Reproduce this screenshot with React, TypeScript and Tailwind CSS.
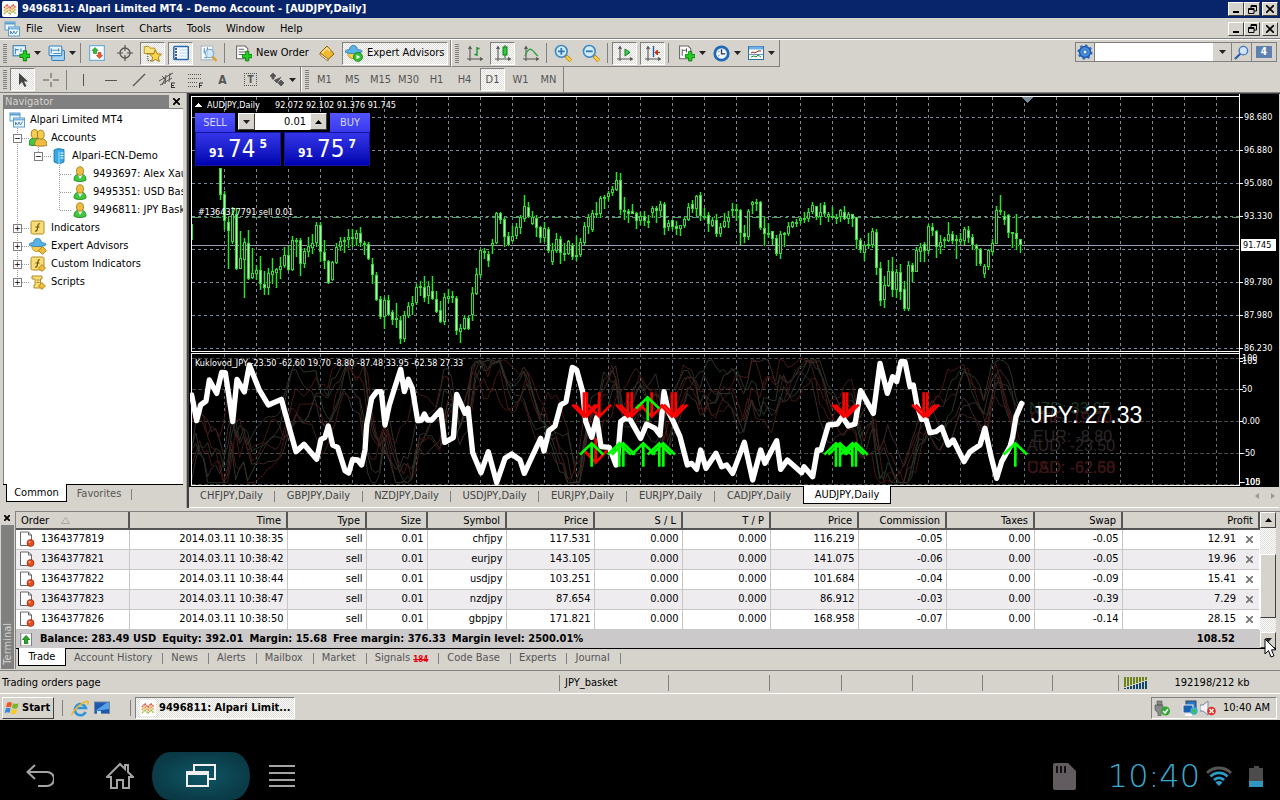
import type { ReactNode } from "react";

// [high, body top, body bottom, low, filled]
const CANDLES = [
  [78,78,105,110,1],[101,104,131,140,1],[127,132,141,179,1],[117,124,152,154,0],[118,124,179,180,1],[141,168,179,179,0],
  [148,152,170,208,0],[140,153,189,190,1],[158,183,188,189,0],[175,180,184,190,0],[166,180,194,200,1],[181,194,198,205,1],
  [178,183,198,205,0],[168,181,185,194,0],[178,179,183,198,0],[167,176,180,189,0],[157,165,176,178,0],[156,165,180,181,1],
  [146,150,180,181,0],[148,150,151,167,0],[148,150,174,186,1],[158,161,174,178,0],[147,156,162,167,0],[144,153,158,164,0],
  [132,135,153,157,0],[132,135,162,172,1],[150,162,171,179,1],[170,171,193,194,1],[171,172,190,191,0],[153,157,173,174,0],
  [147,151,157,161,0],[147,150,152,163,0],[139,147,150,158,0],[139,147,149,157,0],[140,143,149,156,0],[137,143,153,157,1],
  [151,153,155,165,1],[152,154,169,170,1],[168,174,185,194,1],[182,185,210,211,1],[206,209,227,229,1],[207,210,227,239,0],
  [205,210,225,226,1],[220,222,230,235,1],[213,228,230,238,1],[226,230,249,254,1],[221,225,249,252,0],[212,216,226,228,0],
  [206,213,216,225,0],[194,197,213,215,0],[191,196,198,206,0],[186,197,208,212,1],[191,196,206,214,0],[186,201,209,210,1],
  [201,209,222,223,1],[211,220,232,233,1],[203,207,232,235,0],[199,206,209,213,0],[201,206,208,213,1],[206,208,241,245,1],
  [234,238,242,253,0],[225,228,239,240,0],[226,228,239,240,1],[197,203,225,231,0],[178,184,204,205,0],[159,160,185,188,0],
  [158,161,163,169,1],[161,164,171,177,1],[149,153,156,164,0],[122,123,153,154,0],[122,123,130,134,1],[127,129,147,157,1],
  [142,146,155,156,1],[136,146,151,152,0],[133,137,146,149,0],[125,127,138,144,0],[105,116,129,132,0],[112,117,127,128,1],
  [121,127,134,135,0],[125,128,138,147,1],[136,137,148,153,1],[132,138,148,152,0],[137,139,161,163,1],[153,160,172,175,0],
  [143,149,161,163,0],[146,149,163,174,1],[153,163,164,171,0],[150,151,164,165,0],[153,155,167,170,1],[146,165,167,171,0],
  [148,152,165,167,0],[132,136,153,155,0],[124,127,137,144,0],[120,123,140,142,0],[112,123,124,128,0],[106,108,124,128,0],
  [105,107,109,119,0],[101,103,107,111,0],[96,99,103,106,0],[82,90,100,101,0],[83,90,120,125,1],[107,120,122,130,1],
  [119,121,124,133,1],[114,121,124,124,1],[122,123,131,139,1],[122,126,131,135,0],[121,126,131,136,1],[125,131,132,138,0],
  [116,118,123,128,0],[116,118,121,133,1],[111,114,121,126,0],[112,114,138,145,1],[130,133,137,141,0],[130,130,137,140,1],
  [131,136,139,145,1],[135,135,139,146,0],[127,129,136,138,0],[113,117,130,131,0],[110,114,119,123,1],[105,106,119,126,0],
  [102,105,126,131,1],[118,126,127,130,0],[122,125,134,142,1],[127,130,136,137,0],[124,130,144,147,1],[133,137,144,147,0],
  [123,131,137,138,0],[121,127,132,138,0],[113,119,121,126,0],[114,119,120,131,0],[119,120,143,155,1],[135,143,147,153,1],
  [119,121,147,150,0],[111,112,115,124,0],[109,112,113,121,0],[111,112,138,140,1],[127,138,144,156,1],[133,143,144,148,0],
  [141,141,149,155,1],[145,148,164,166,1],[141,144,164,169,0],[142,143,144,157,0],[132,136,144,146,0],[131,132,137,138,0],
  [129,132,133,137,0],[127,128,131,134,0],[122,128,130,133,0],[118,122,129,132,0],[112,115,122,124,0],[116,116,127,130,1],
  [113,122,127,135,0],[112,115,124,127,1],[122,124,127,132,0],[117,126,128,128,0],[124,127,128,134,0],[119,120,127,132,0],
  [116,122,129,130,1],[122,124,129,134,0],[124,124,129,137,1],[127,127,150,159,1],[148,150,160,163,1],[154,155,163,171,0],
  [143,154,155,159,0],[138,141,155,158,0],[139,142,178,185,1],[172,178,211,216,1],[186,195,210,218,0],[170,181,196,197,0],
  [167,181,200,207,1],[179,182,200,208,0],[174,182,202,210,1],[191,199,219,221,1],[171,175,219,221,0],[173,175,182,192,1],
  [157,160,182,182,0],[153,157,162,172,0],[152,154,161,172,1],[134,136,161,164,0],[133,137,141,146,1],[140,141,157,168,1],
  [145,152,157,164,0],[147,149,151,158,0],[132,144,151,152,0],[141,144,151,154,1],[145,149,150,169,0],[143,149,152,155,0],
  [137,139,151,155,0],[136,140,148,153,1],[144,147,155,160,1],[154,155,159,176,1],[158,159,174,176,1],[174,176,184,188,0],
  [159,160,177,180,0],[149,153,162,165,0],[116,120,154,154,0],[105,120,122,125,1],[121,126,130,135,1],[124,125,143,148,1],
  [142,142,144,158,0],[124,143,149,160,1],[149,149,155,163,1],
];

// Indicator points use a grid three times finer than the pane
const JPY_LINE: number[][] = [
  [5,135],[20,212],[32,165],[48,153],[58,90],[80,130],[95,67],[106,68],[128,215],[141,88],[163,126],[178,45],[207,118],[235,165],
  [274,148],[318,305],[342,283],[380,328],[393,268],[405,262],[415,228],[428,285],[443,292],[465,362],[476,369],[488,328],
  [503,330],[515,345],[525,300],[530,225],[545,145],[560,125],[574,125],[585,225],[598,165],[612,120],[632,58],[643,125],
  [655,88],[667,115],[683,212],[695,210],[703,192],[712,210],[725,210],[752,180],[764,277],[790,263],[800,133],[825,190],
  [834,175],[848,308],[873,368],[895,305],[920,398],[945,325],[965,312],[990,330],[1003,370],[1027,318],[1052,265],[1062,303],
  [1077,242],[1095,228],[1112,165],[1128,155],[1147,52],[1160,60],[1178,125],[1187,215],[1205,262],[1220,203],[1233,290],
  [1258,292],[1278,345],[1285,300],[1292,215],[1305,205],[1320,208],[1352,265],[1370,222],[1395,235],[1410,255],[1422,125],
  [1435,185],[1450,215],[1470,260],[1492,345],[1505,340],[1520,358],[1532,300],[1548,355],[1578,310],[1595,350],[1610,345],
  [1628,370],[1663,277],[1688,390],[1712,300],[1725,340],[1760,272],[1772,358],[1792,330],[1835,368],[1842,350],[1868,380],
  [1882,300],[1893,300],[1915,225],[1942,222],[1957,200],[1975,228],[1995,222],[2012,122],[2050,190],[2070,40],[2092,130],
  [2108,80],[2120,95],[2133,35],[2145,35],[2160,110],[2170,105],[2180,160],[2195,208],[2208,208],[2220,248],[2238,245],
  [2255,232],[2275,285],[2290,270],[2322,335],[2340,305],[2370,285],[2385,235],[2402,315],[2420,385],[2435,335],[2460,290],
  [2468,260],[2478,200],[2495,160],
];

const DOWN_ARROWS = [1182, 1190, 1228, 1313, 1325, 1385, 1446, 1457, 1961, 1971, 2201, 2212];
const UP_ARROWS = [1205, 1288, 1300, 1360, 1408, 1420, 1938, 1950, 1987, 1998, 2476];

function jpyAt(x: number) {
  for (let i = 1; i < JPY_LINE.length; i++) {
    const [x1, y1] = JPY_LINE[i];
    if (x <= x1) {
      const [x0, y0] = JPY_LINE[i - 1];
      return y0 + ((y1 - y0) * (x - x0)) / (x1 - x0);
    }
  }
  return 160;
}

function crossPoints(k: number) {
  const pts: string[] = [];
  for (let x = 5; x <= 2490; x += 12) {
    const mirror = 430 - jpyAt(x - 8 + k * 3);
    const wave = Math.sin(x / (47 + k * 9) + k * 1.7) * (45 + k * 9) + Math.sin(x / (15 + k * 2) + k) * 26;
    const y = 215 + (mirror - 215) * 0.95 + wave;
    const bounded = Math.max(28 + (y < 28 ? (28 - y) * 0.25 : 0), Math.min(398, y));
    pts.push(`${x},${Math.round(bounded)}`);
  }
  return pts.join(" ");
}

const CROSS_COLORS = ["#451815", "#26352a", "#3a2a29", "#4a1715", "#293629", "#332d2d", "#401c19"];

const raised = "border border-t-white border-l-white border-r-[#404040] border-b-[#404040] bg-[#d5d3cc]";
const pressed =
  "border border-t-[#808080] border-l-[#808080] border-r-white border-b-white bg-[repeating-conic-gradient(#fff_0_25%,#dddbd6_0_50%)] bg-[length:2px_2px]";

function Icon({ children, size = 16 }: { children: ReactNode; size?: number }) {
  return (
    <svg width={size} height={size} viewBox="0 0 16 16" className="shrink-0" fill="none" aria-hidden="true">
      {children}
    </svg>
  );
}

const Plus = () => <path d="M10 6h3v3h3v3h-3v3h-3v-3H7V9h3z" fill="#1fd01f" stroke="#087808" strokeWidth=".8" />;

const LogoIcon = () => (
  <Icon>
    <rect width="16" height="16" rx="2" fill="#fff" />
    <path d="M2 7l3-3 3 3 3-3 3 3" stroke="#d8543c" strokeWidth="1.6" strokeDasharray="1.5 .6" />
    <path d="M2 10l3-3 3 3 3-3 3 3" stroke="#e89838" strokeWidth="1.6" strokeDasharray="1.5 .6" />
    <path d="M2 13l3-3 3 3 3-3 3 3" stroke="#a8b850" strokeWidth="1.6" strokeDasharray="1.5 .6" />
  </Icon>
);
const ChartsIcon = () => (
  <Icon>
    <rect x="1" y="1" width="10" height="8" fill="#eef7fd" stroke="#5a9bd0" />
    <path d="M1 2.5h10" stroke="#5a9bd0" strokeWidth="2" />
    <rect x="4.500" y="6" width="11" height="9" fill="#f4fafe" stroke="#5a9bd0" />
    <path d="M5 7.500h10" stroke="#7ab2de" strokeWidth="2" />
    <path d="M6.500 13V10l2 3 1.500-3 1.500 3 2-3.500" stroke="#4a88c0" />
  </Icon>
);
const NewChartIcon = () => (
  <Icon size={18}>
    <rect x="1" y="1.500" width="11" height="9" fill="#e6f4fc" stroke="#3a80b8" />
    <path d="M3 4v5M3 5h3M8 4v3" stroke="#4a88b8" />
    <Plus />
  </Icon>
);
const ProfilesIcon = () => (
  <Icon size={17}>
    <rect x="3.500" y="5" width="12" height="9.500" rx="1" fill="#a8d4f4" stroke="#3a80b8" />
    <rect x="1" y="1" width="12" height="9" rx="1" fill="#e6f4fc" stroke="#3a80b8" />
    <path d="M3 3v5M3 5h8M5 8h7M10 3v3" stroke="#4a90c8" />
  </Icon>
);
const MarketIcon = () => (
  <Icon>
    <rect x=".5" y=".5" width="15" height="15" rx="1" fill="#fff" stroke="#6cb0de" strokeWidth="1.500" />
    <path d="M6 2.500l3 3H7.500v3h-3v-3H3z" fill="#2cc030" stroke="#107818" strokeWidth=".6" />
    <path d="M10.500 13.500l-3-3H9v-3h3v3h1.500z" fill="#f06038" stroke="#b02810" strokeWidth=".6" />
  </Icon>
);
const TargetIcon = () => (
  <Icon>
    <circle cx="8" cy="8" r="5" stroke="#555" strokeWidth="1.300" />
    <path d="M8 0v6M8 10v6M0 8h6M10 8h6" stroke="#555" strokeWidth="1.200" />
  </Icon>
);
const StarFolderIcon = () => (
  <Icon size={19}>
    <path d="M1 2h4l1 1.500h4V8H1z" fill="#f8e27c" stroke="#b89020" strokeWidth=".8" />
    <path d="M4 8v6h4" stroke="#555" strokeDasharray="1 1" />
    <path d="M10.500 5l1.500 3.300 3.500.3-2.600 2.500.8 3.700-3.200-1.900-3.200 1.900.8-3.700L5.500 8.600 9 8.300z" fill="#fbd648" stroke="#a87810" strokeWidth=".8" />
  </Icon>
);
const TerminalIcon = () => (
  <Icon>
    <rect x=".8" y="1.500" width="14.500" height="13" rx="1" fill="#f6fbff" stroke="#2868b0" strokeWidth="1.500" />
    <path d="M2 4h2M2 7h2M2 10h2M2 13h2" stroke="#102858" strokeWidth="1.500" />
    <path d="M6 5h8M6 8h8M6 11h8" stroke="#b8d8f4" />
  </Icon>
);
const TesterIcon = () => (
  <Icon size={17}>
    <path d="M1 1h11v13H1z" fill="#fafafa" stroke="#a8b8c4" />
    <path d="M4 3v5M7 2v8M4 12h3" stroke="#4890c8" />
    <circle cx="9" cy="8" r="4" fill="#c8e4f8" fillOpacity=".8" stroke="#78a8cc" />
    <path d="M12 11l3.500 4" stroke="#e0a020" strokeWidth="2.200" />
  </Icon>
);
const DocPlusIcon = ({ lines = true }: { lines?: boolean }) => (
  <Icon size={17}>
    <path d="M1.500 1h8l2.500 2.500V13H1.500z" fill="#fff" stroke="#666" />
    <path d={lines ? "M3.500 4h5M3.500 6.500h6M3.500 9h4" : "M4 4v6M4 5h4M8 3v4"} stroke="#666" />
    <Plus />
  </Icon>
);
const BookIcon = () => (
  <Icon>
    <path d="M1 8l7-7 7 8-6 5.500z" fill="#f0b830" stroke="#8c5c08" />
    <path d="M1 8v2l8 6v-2z" fill="#fff" stroke="#8c5c08" strokeWidth=".8" />
    <path d="M3 8l5-5 3 3" stroke="#ffe890" strokeWidth="1.500" />
  </Icon>
);
const ExpertIcon = ({ play = false }: { play?: boolean }) => (
  <Icon size={18}>
    <circle cx="7" cy="8.500" r="4.500" fill="#f4cc50" stroke="#b88818" strokeWidth=".7" />
    <path d="M4 5c0-5 7-5 7 0 3 0 5 1 4 2-2 2-13 2-15 0 0-1 1-2 4-2z" fill="#58b4e8" stroke="#2474a8" strokeWidth=".7" />
    {play ? <circle cx="11.500" cy="11.500" r="4" fill="#30c030" stroke="#108010" strokeWidth=".7" /> : null}
    {play ? <path d="M10.200 9.500v4l3.300-2z" fill="#fff" /> : <path d="M12 8.500l3.500 3.500-3.500 3.500L8.500 12z" fill="#f0bc38" stroke="#a07010" strokeWidth=".7" />}
  </Icon>
);
const Axes = () => <path d="M3 2v14M0 14h16M1.500 4L3 1.500 4.500 4M13 12.500l2.500 1.500-2.500 1.500" stroke="#555" strokeWidth="1.100" />;
const BarChartIcon = () => <Icon><Axes /><path d="M10 2v9M7.500 9.500H10M10 3.500h2.500" stroke="#189028" strokeWidth="1.300" /></Icon>;
const CandleIcon = () => <Icon><Axes /><path d="M10 0v13" stroke="#107818" /><rect x="8" y="2" width="4" height="8" fill="#2cd03c" stroke="#107818" /></Icon>;
const LineChartIcon = () => <Icon><Axes /><path d="M2 11c2-6 5-8 7-6 2 1 3 4 6 6" stroke="#30a040" strokeWidth="1.300" /></Icon>;
const ScrollIcon = () => <Icon><Axes /><path d="M8 4l5 3.500L8 11z" fill="#40c850" stroke="#108020" /></Icon>;
const ShiftIcon = () => <Icon><Axes /><path d="M8.500 1v11" stroke="#2858a8" strokeWidth="1.400" /><path d="M10 7.500h5M12.500 5L10 7.500l2.500 2.500z" fill="#c03010" stroke="#c03010" /></Icon>;
const ZoomIcon = ({ minus = false }: { minus?: boolean }) => (
  <Icon size={18}>
    <path d="M10.500 10.500l4.500 4.500" stroke="#a87810" strokeWidth="3.200" />
    <path d="M11 11l4 4" stroke="#f8d040" strokeWidth="2" />
    <circle cx="6.500" cy="6.500" r="5.200" fill="#d0ecfc" stroke="#3c88c4" strokeWidth="1.400" />
    <path d={minus ? "M3.500 6.500h6" : "M3.500 6.500h6M6.500 3.500v6"} stroke="#3478b0" strokeWidth="1.600" />
  </Icon>
);
const ClockIcon = () => (
  <Icon size={17}>
    <circle cx="8" cy="8" r="6.300" fill="#eef8ff" stroke="#2068b8" strokeWidth="2.600" />
    <path d="M8 4v4.300h3.500" stroke="#334" strokeWidth="1.200" />
    <path d="M5 5.500l1 1M5 10.500l1-1" stroke="#88a" />
  </Icon>
);
const TemplateIcon = () => (
  <Icon>
    <rect x=".5" y="1.500" width="15" height="13" fill="#fff" stroke="#2c70a8" />
    <path d="M1 3h14" stroke="#70b0e0" strokeWidth="3" />
    <path d="M3 8l2-1 2 1 3-2h3" stroke="#902018" />
    <path d="M3 12l3-1 2 1 2-2 3 2" stroke="#209040" />
    <path d="M1 9.500h14" stroke="#2c70a8" strokeWidth=".7" />
  </Icon>
);
const FxIcon = ({ tag = false }: { tag?: boolean }) => (
  <Icon>
    <rect x="1" y="1" width="13" height="13" rx="1.500" fill="#f8dc78" stroke="#b08c28" />
    <path d="M10 4c-2-1-2 1-2.400 3.500S7 11.500 5 11M5.500 7h4" stroke="#705008" strokeWidth="1.200" />
    {tag ? <path d="M12 8.500l3.500 3.500-3.500 3.500L8.500 12z" fill="#f0bc38" stroke="#a07010" strokeWidth=".7" /> : null}
  </Icon>
);
const ScriptIcon = () => (
  <Icon>
    <path d="M2 2h10v3h-1.500v6H13v3H4v-3h1V5H2z" fill="#f8dc78" stroke="#b08c28" />
    <path d="M6.500 6h3M6.500 8.500h3" stroke="#b08c28" />
    <path d="M12 8.500l3.500 3.500-3.500 3.500L8.500 12z" fill="#f0bc38" stroke="#a07010" strokeWidth=".7" />
  </Icon>
);
const PersonIcon = () => (
  <Icon>
    <path d="M2 14c0-5 3-6 6-6s6 1 6 6c-2 2-10 2-12 0z" fill="#40c840" stroke="#188018" strokeWidth=".8" />
    <path d="M6 9l2 4 2.500-4z" fill="#fff" />
    <ellipse cx="8" cy="5" rx="3.500" ry="4.300" fill="#f0bc40" stroke="#a07818" strokeWidth=".8" />
  </Icon>
);
const PeopleIcon = () => (
  <Icon size={18}>
    <path d="M0 14c0-5 2-6 5-6s5 1 5 6c-2 1-8 1-10 0z" fill="#40c840" stroke="#188018" strokeWidth=".8" />
    <ellipse cx="5" cy="4.500" rx="3" ry="4" fill="#f4cc50" stroke="#a07818" strokeWidth=".8" />
    <path d="M5 14.500c0-5 2-6 5-6s6 1 6 6c-2 1-9 1-11 0z" fill="#f0bc40" stroke="#a07818" strokeWidth=".8" />
    <ellipse cx="10.500" cy="5" rx="3" ry="4" fill="#f4cc50" stroke="#a07818" strokeWidth=".8" />
  </Icon>
);
const ServerIcon = () => (
  <Icon>
    <path d="M3 2l4-1.500 6 1V14l-5 2-5-2z" fill="#38a8e4" stroke="#1870a8" strokeWidth=".8" />
    <path d="M8 3.500V16" stroke="#a8e0fc" />
    <path d="M9.500 5h3M9.500 7.500h3M9.500 10h3" stroke="#fff" />
  </Icon>
);
const OrderIcon = () => (
  <Icon>
    <path d="M1.500 1h8l3 3v10.500h-11z" fill="#fff" stroke="#666" />
    <path d="M9.500 1v3h3" stroke="#666" />
    <circle cx="11.500" cy="12" r="3.500" fill="#e05020" stroke="#982408" strokeWidth=".7" />
    <circle cx="10.500" cy="11" r="1" fill="#f8a888" />
  </Icon>
);

const Caret = () => (
  <svg width="7" height="4" className="shrink-0" aria-hidden="true"><path d="M0 0h7L3.500 4z" fill="#222" /></svg>
);
const Grip = () => (
  <span className="ml-[3px] h-[19px] w-1 shrink-0 bg-[repeating-linear-gradient(to_bottom,#808080_0_1px,#d5d3cc_1px_2px)]" />
);
const Sep = ({ className = "h-5" }: { className?: string }) => <span className={`w-px shrink-0 bg-[#808080] ${className}`} />;

function ToolButton({ label, on, children }: { label: string; on?: boolean; children: ReactNode }) {
  return (
    <button aria-label={label} className={`flex h-[23px] w-[25px] shrink-0 items-center justify-center ${on ? pressed : ""}`}>
      {children}
    </button>
  );
}

function DropButton({ label, children }: { label: string; children: ReactNode }) {
  return (
    <button aria-label={label} className="flex h-[23px] w-8 shrink-0 items-center justify-center gap-1 pl-px">
      {children}
      <Caret />
    </button>
  );
}

function WindowButtons() {
  return (
    <div className="flex pr-[2px]">
      <button aria-label="Minimize" className={`flex h-[14px] w-4 items-end justify-center pb-[2px] ${raised}`}>
        <span className="h-[2px] w-[6px] bg-black" />
      </button>
      <button aria-label="Restore" className={`flex h-[14px] w-4 items-center justify-center ${raised}`}>
        <svg width="9" height="9" fill="none" stroke="#000"><path d="M3 3V.5h5.500V6H6M3 1.500h5.500M.5 3.500h5.500v5H.5zM.5 4.500H6" /></svg>
      </button>
      <button aria-label="Close" className={`ml-[2px] flex h-[14px] w-4 items-center justify-center ${raised}`}>
        <svg width="8" height="8" stroke="#000" strokeWidth="1.600"><path d="M0 0l8 8M8 0L0 8" /></svg>
      </button>
    </div>
  );
}

function Toolbars() {
  const frames = ["M1", "M5", "M15", "M30", "H1", "H4", "D1", "W1", "MN"];
  return (
    <div className="relative">
      <div className="flex h-[27px] items-center">
        <div className="flex h-full items-center gap-[3px] border-b border-r border-[#808080] pr-[2px]">
          <Grip />
          <DropButton label="New chart"><NewChartIcon /></DropButton>
          <DropButton label="Profiles"><ProfilesIcon /></DropButton>
          <Sep />
          <ToolButton label="Market watch"><MarketIcon /></ToolButton>
          <ToolButton label="Data window"><TargetIcon /></ToolButton>
          <ToolButton label="Navigator" on><StarFolderIcon /></ToolButton>
          <ToolButton label="Terminal" on><TerminalIcon /></ToolButton>
          <ToolButton label="Strategy tester"><TesterIcon /></ToolButton>
          <Sep />
          <button className="flex h-[23px] w-[83px] items-center gap-1 whitespace-nowrap pl-[7px]"><DocPlusIcon />New Order</button>
          <ToolButton label="MetaEditor"><BookIcon /></ToolButton>
          <button className={`flex h-[23px] w-[106px] items-center gap-1 whitespace-nowrap pl-[2px] ${pressed}`}><ExpertIcon play />Expert Advisors</button>
        </div>
        <div className="flex h-full items-center gap-[3px] border-b border-l border-r border-b-[#808080] border-l-white border-r-[#808080] pr-[2px]">
          <Grip />
          <ToolButton label="Bar chart"><BarChartIcon /></ToolButton>
          <ToolButton label="Candlesticks" on><CandleIcon /></ToolButton>
          <ToolButton label="Line chart"><LineChartIcon /></ToolButton>
          <Sep />
          <ToolButton label="Zoom in"><ZoomIcon /></ToolButton>
          <ToolButton label="Zoom out"><ZoomIcon minus /></ToolButton>
          <Sep className="mx-px h-5" />
          <ToolButton label="Auto scroll" on><ScrollIcon /></ToolButton>
          <ToolButton label="Chart shift" on><ShiftIcon /></ToolButton>
          <Sep className="mr-[3px] h-5" />
          <DropButton label="Indicators"><DocPlusIcon lines={false} /></DropButton>
          <DropButton label="Periods"><ClockIcon /></DropButton>
          <DropButton label="Templates"><TemplateIcon /></DropButton>
        </div>
        <div className="ml-auto mr-[3px] mt-[2px] flex h-5 self-start border border-[#808080]">
          <button aria-label="Settings" className="flex w-[19px] items-center justify-center border-r border-[#808080]">
            <Icon>
              <circle cx="8" cy="8" r="5.500" fill="#4a90e0" stroke="#1c58b0" strokeWidth="1.500" />
              <circle cx="8" cy="8" r="6.800" stroke="#2c68c0" strokeWidth="1.500" strokeDasharray="2.600 2.700" />
              <circle cx="8" cy="8" r="2.200" fill="#d8ecff" stroke="#1c58b0" />
            </Icon>
          </button>
          <input aria-label="Search" className="w-[118px] bg-white px-1 outline-none" />
          <button aria-label="Search history" className="flex w-[18px] items-center justify-center"><Caret /></button>
          <button aria-label="Find" className="flex w-5 items-center justify-center border-l border-[#808080]">
            <Icon size={15}><path d="M7 9l-6 6" stroke="#2c5cb0" strokeWidth="2.200" /><circle cx="10" cy="6" r="4.500" fill="#d0e4f8" stroke="#4878c0" strokeWidth="1.500" /></Icon>
          </button>
          <button className="flex w-[25px] items-center justify-center border-l border-[#808080]">
            <span className="h-3 w-4 bg-[#6080b0] text-center text-[10px] font-bold leading-3 text-white">4</span>
          </button>
        </div>
      </div>
      <div className="flex h-[26px] items-center border-b border-[#808080]">
        <div className="flex h-full items-center gap-[3px] border-r border-[#808080] pr-[2px]">
          <Grip />
          <ToolButton label="Cursor" on><Icon><path d="M4 1v12l3-3 2.500 5 2-1L9 9.500h4z" fill="#444" /></Icon></ToolButton>
          <ToolButton label="Crosshair"><Icon><path d="M8 1v5M8 10v5M0 8h6M10 8h6" stroke="#555" /></Icon></ToolButton>
          <Sep />
          <ToolButton label="Vertical line"><Icon><path d="M8.500 2v12" stroke="#555" /></Icon></ToolButton>
          <ToolButton label="Horizontal line"><Icon><path d="M2 8.500h12" stroke="#555" /></Icon></ToolButton>
          <ToolButton label="Trendline"><Icon><path d="M2 14L14 2" stroke="#555" strokeWidth="1.200" /></Icon></ToolButton>
          <ToolButton label="Channel">
            <Icon><path d="M0 9L14 1M1 13l12-7M3 4l3 3-3 6M7 3l-1 9M11 1l-1 9" stroke="#555" /><path d="M12 11h4M12 13.500h3M12 15.500h4M12.500 11v5" stroke="#333" /></Icon>
          </ToolButton>
          <ToolButton label="Fibonacci">
            <Icon><path d="M1 2.500h14M1 6.500h14M1 10.500h9M1 14.500h9" stroke="#555" strokeDasharray="1 1" /><path d="M12.500 16v-5h4M12 13.500h3" stroke="#333" /></Icon>
          </ToolButton>
          <ToolButton label="Text"><span className="text-xs font-bold text-[#555]">A</span></ToolButton>
          <ToolButton label="Text label">
            <span className="flex h-[13px] w-[13px] items-center justify-center border border-dotted border-[#555] text-[10px] font-bold leading-none text-[#555]">T</span>
          </ToolButton>
          <DropButton label="Arrows">
            <Icon><path d="M1 4l3-3 3 3-2 1v2H3V5zM12 8l3 3-3 3-3-3zM5 8l3 3 4-6" fill="#555" stroke="#555" strokeWidth=".8" /></Icon>
          </DropButton>
        </div>
        <div className="flex h-full items-center gap-[3px] border-l border-r border-l-white border-r-[#808080] pr-[2px] text-[#555]">
          <Grip />
          {frames.map((f) => (
            <ToolButton key={f} label={f} on={f === "D1"}>{f}</ToolButton>
          ))}
        </div>
      </div>
    </div>
  );
}

type Node = { label: string; icon: ReactNode; depth: number; box?: "+" | "−" };

const NODES: Node[] = [
  { label: "Alpari Limited MT4", icon: <ChartsIcon />, depth: 0 },
  { label: "Accounts", icon: <PeopleIcon />, depth: 1, box: "−" },
  { label: "Alpari-ECN-Demo", icon: <ServerIcon />, depth: 2, box: "−" },
  { label: "9493697: Alex Xau", icon: <PersonIcon />, depth: 3 },
  { label: "9495351: USD Bas", icon: <PersonIcon />, depth: 3 },
  { label: "9496811: JPY Bask", icon: <PersonIcon />, depth: 3 },
  { label: "Indicators", icon: <FxIcon />, depth: 1, box: "+" },
  { label: "Expert Advisors", icon: <ExpertIcon />, depth: 1, box: "+" },
  { label: "Custom Indicators", icon: <FxIcon tag />, depth: 1, box: "+" },
  { label: "Scripts", icon: <ScriptIcon />, depth: 1, box: "+" },
];

const INDENT = ["pl-1", "pl-[9px]", "pl-[30px]", "pl-[67px]"];

function Navigator() {
  return (
    <aside className="flex w-[187px] shrink-0 flex-col border-r border-[#a8a6a0] pb-1 pl-[3px] pr-[3px] pt-[2px]">
      <div className="flex h-[13px] items-center">
        <h2 className="h-full flex-1 bg-[#808080] pl-[2px] leading-[13px] text-[#d5d3cc]">Navigator</h2>
        <button aria-label="Close navigator" className="flex w-[14px] justify-center">
          <svg width="7" height="7" stroke="#000" strokeWidth="1.800"><path d="M0 0l7 7M7 0L0 7" /></svg>
        </button>
      </div>
      <div className="relative min-h-0 flex-1 overflow-hidden border-l border-t border-[#808080] bg-white">
        <svg className="absolute left-0 top-0 h-48 w-24" fill="none" stroke="#999" strokeDasharray="1 1" aria-hidden="true">
          <path d="M13.500 17v154M18 29.500h8M18 119.500h8M18 137.500h8M18 155.500h8M18 173.500h8M34.500 36v8M38 47.500h10M55.500 56v46M56 65.500h11M56 83.500h11M56 101.500h11" />
        </svg>
        <ul className="relative pt-[2px]">
          {NODES.map((n) => (
            <li key={n.label} className={`flex h-[18px] items-center gap-1 whitespace-nowrap ${INDENT[n.depth]}`}>
              {n.box ? (
                <button aria-label={`Toggle ${n.label}`} className="mr-[3px] flex h-[9px] w-[9px] shrink-0 items-center justify-center border border-[#808080] bg-white text-[9px] leading-none">
                  {n.box}
                </button>
              ) : null}
              <span className="flex w-[18px] shrink-0 justify-center">{n.icon}</span>
              <span>{n.label}</span>
            </li>
          ))}
        </ul>
      </div>
      <div className="flex h-5 items-start border-t border-black pl-[3px]">
        <button className="-mt-px h-[18px] w-[61px] border border-t-0 border-black bg-white">Common</button>
        <button className="h-[18px] w-[64px] text-[#555]">Favorites</button>
        <Sep className="mt-1 h-[11px]" />
      </div>
    </aside>
  );
}

function PriceChart() {
  const verticals = Array.from({ length: 40 }, (_, i) => 34 + i * 32);
  const horizontals = [27, 60, 93, 126, 159, 192, 225, 258];
  return (
    <svg className="h-full w-full" shapeRendering="crispEdges" role="img" aria-label="AUDJPY daily chart">
      <g stroke="#778899" strokeDasharray="3 3">
        {verticals.map((x) => <line key={x} x1={x + 0.5} x2={x + 0.5} y1="3" y2="392" />)}
        {horizontals.map((y) => <line key={y} x1="2" x2="100%" y1={y - 3.5} y2={y - 3.5} />)}
      </g>
      <line x1="2" x2="100%" y1="123.500" y2="123.500" stroke="#4ea35c" strokeDasharray="9 4 3 4" />
      <line x1="2" x2="100%" y1="151.500" y2="151.500" stroke="#9a9ab0" />
      <g transform="translate(0 -4)">
        <path d="M2 134v16" stroke="#30d830" strokeWidth="2" />
        {CANDLES.map(([hi, top, bot, lo, filled], i) => {
          const x = 30 + i * 4;
          return (
            <g key={i} stroke="#2ee02e">
              <rect x={x - 1} y={hi} width="3" height={lo - hi} fill="#0b3a0b" stroke="none" />
              <line x1={x + 0.5} x2={x + 0.5} y1={hi} y2={lo} />
              <rect x={x - 0.5} y={top + 0.5} width="2" height={Math.max(bot - top - 1, 0.5)} fill={filled ? "#b4fab4" : "#031403"} />
            </g>
          );
        })}
        <path d="M832 7h11l-5.500 6z" fill="#778899" />
      </g>
      <rect x="0" y="258" width="100%" height="2" fill="#000" />
      <g transform="translate(0 256)">
        <rect x="2" y="4" width="100%" height="132" fill="#000" />
        {verticals.map((x) => <line key={x} x1={x + 0.5} x2={x + 0.5} y1="4" y2="135" stroke="#62707e" strokeDasharray="3 3" />)}
        {[8, 39, 71, 103, 134].map((y) => <line key={y} x1="2" x2="100%" y1={y + 0.5} y2={y + 0.5} stroke="#4a4a4a" strokeDasharray="4 2" />)}
        <g transform="scale(0.333333)" fill="none" shapeRendering="auto">
          {CROSS_COLORS.map((c, k) => <polyline key={k} points={crossPoints(k)} stroke={c} strokeWidth="3" />)}
        </g>
        <g fontFamily="Liberation Sans, Arial, sans-serif" fontSize="16">
          <text x="839" y="64" fill="#1b3320">NZD: 33.95</text>
          <text x="840" y="73" fill="#44141a">CHF: 19.70</text>
          <text x="843" y="92" fill="#2e2628">EUR: -8.80</text>
          <text x="837" y="101" fill="#2e2628">AUD: -23.50</text>
          <text x="837" y="123" fill="#441414">CAD: -62.60</text>
          <text x="837" y="123" fill="#3a1616">USD: -62.58</text>
          <text x="841" y="73" fill="#fff" fontSize="23">JPY: 27.33</text>
        </g>
        <g transform="scale(0.333333)" fill="none" shapeRendering="auto">
          <polyline points={JPY_LINE.map((p) => p.join(",")).join(" ")} stroke="#fff" strokeWidth="16" strokeLinejoin="round" strokeLinecap="round" />
          <path d="M1217 265v73m-34-36l34 36 34-36" stroke="#f00" strokeWidth="8" />
          {DOWN_ARROWS.map((x) => <path key={x} d={`M${x} 127v73m-35-36l35 36 35-36`} stroke="#f00" strokeWidth="8" />)}
          {UP_ARROWS.map((x) => <path key={x} d={`M${x} 350v-70m-35 34l35-34 35 34`} stroke="#0f0" strokeWidth="8" />)}
          <path d="M1373 212v-70m-35 34l35-34 35 34" stroke="#0f0" strokeWidth="8" />
        </g>
      </g>
      <g fill="#fff">
        <rect x="1" y="2" width="100%" height="1" />
        <rect x="1" y="2" width="1" height="256" />
        <rect x="1" y="257" width="100%" height="1" />
        <rect x="1" y="259" width="100%" height="1" />
        <rect x="1" y="259" width="1" height="133" />
        <rect x="1" y="391" width="100%" height="1" />
        <path d="M5 13h7L8.500 9z" />
      </g>
      <g fill="#fff" fontSize="9">
        <text x="17" y="14">AUDJPY,Daily</text>
        <text x="85" y="14">92.072 92.102 91.376 91.745</text>
        <text x="8" y="121">#1364377791 sell 0.01</text>
        <text x="5" y="272">Kuklovod_JPY -23.50 -62.60 19.70 -8.80 -87.48 33.95 -62.58 27.33</text>
      </g>
    </svg>
  );
}

const PRICES = [
  ["98.680", 23], ["96.880", 56], ["95.080", 89], ["93.330", 122], ["89.780", 188], ["87.980", 221], ["86.230", 254],
  ["100", 264], ["105", 267], ["50", 295], ["0.00", 327], ["-50", 359], ["-100", 388], ["-105", 388],
] as const;

function Scale() {
  return (
    <svg className="h-full w-[40px] shrink-0 border-l border-white" fontSize="9" fill="#fff" role="img" aria-label="Scale">
      {PRICES.map(([p, y]) => (
        <g key={p}>
          <rect x="0" y={y} width="3" height="1" />
          <text x={y > 256 ? 2 : 4} y={y + 3}>{p}</text>
        </g>
      ))}
      <rect x="1" y="145" width="35" height="12" />
      <text x="3" y="154" fill="#000">91.745</text>
    </svg>
  );
}

function Quote({ big, sup }: { big: string; sup: string }) {
  return (
    <button className="flex h-[34px] w-[86px] justify-center gap-1 border border-[#1414a0] bg-gradient-to-b from-[#3434e8] to-[#0000b0] text-white">
      <span className="self-end pb-[6px] text-xs font-bold leading-none">91</span>
      <span className="pt-1 text-2xl leading-none">{big}</span>
      <span className="pt-[5px] text-xs font-bold leading-none">{sup}</span>
    </button>
  );
}

function OneClick() {
  const side = "h-[19px] w-10 bg-gradient-to-b from-[#5454ff] to-[#3838ec] text-[#d8d8ff]";
  return (
    <div className="absolute left-[5px] top-[19px] w-[175px] bg-black">
      <div className="flex justify-between">
        <button className={side}>SELL</button>
        <div className="flex h-[17px]">
          <button aria-label="Less" className={`flex w-[17px] items-center justify-center ${raised}`}><Caret /></button>
          <input aria-label="Volume" defaultValue="0.01" className="w-[55px] bg-white pr-1 text-right text-black outline-none" />
          <button aria-label="More" className={`flex w-[17px] items-center justify-center ${raised}`}>
            <svg width="7" height="4"><path d="M0 4h7L3.500 0z" /></svg>
          </button>
        </div>
        <button className={side}>BUY</button>
      </div>
      <div className="flex justify-between">
        <Quote big="74" sup="5" />
        <Quote big="75" sup="7" />
      </div>
    </div>
  );
}

function ChartWindow() {
  const tabs = ["CHFJPY", "GBPJPY", "NZDJPY", "USDJPY", "EURJPY", "EURJPY", "CADJPY", "AUDJPY"];
  return (
    <section className="flex min-w-0 flex-1 flex-col border-l-2 border-t border-[#404040] pr-[1px]">
      <div className="relative min-h-0 flex-1 bg-black">
        <div className="flex h-full pl-px">
          <div className="relative min-w-0 flex-1">
            <PriceChart />
            <OneClick />
          </div>
          <Scale />
        </div>
      </div>
      <div className="flex h-[22px] items-start border-b border-t border-b-white border-t-black pb-[2px]">
        {tabs.map((t, i) => (
          <button
            key={i}
            className={`h-[18px] w-[88px] shrink-0 first:w-[86px] ${i === 7 ? "-mt-px border border-t-0 border-black bg-white" : "text-[#444]"}`}
          >
            <span className="flex items-center justify-center">
              <span className="flex-1">{t},Daily</span>
              {i < 6 ? <Sep className="h-[11px]" /> : null}
            </span>
          </button>
        ))}
        <div className="ml-auto flex items-center gap-3 self-center pr-1">
          <svg width="4" height="6"><path d="M4 0v6L0 3z" fill="#999" /></svg>
          <svg width="4" height="6"><path d="M0 0v6l4-3z" fill="#999" /></svg>
        </div>
      </div>
    </section>
  );
}

const COLUMNS = ["Order", "Time", "Type", "Size", "Symbol", "Price", "S / L", "T / P", "Price", "Commission", "Taxes", "Swap", "Profit"];
const WIDTHS = ["w-[113px]", "w-[158px]", "w-[79px]", "w-[61px]", "w-[79px]", "w-[88px]", "w-[88px]", "w-[88px]", "w-[88px]", "w-[88px]", "w-[88px]", "w-[88px]", ""];
const ORDERS = [
  ["1364377819", "2014.03.11 10:38:35", "sell", "0.01", "chfjpy", "117.531", "0.000", "0.000", "116.219", "-0.05", "0.00", "-0.05", "12.91"],
  ["1364377821", "2014.03.11 10:38:42", "sell", "0.01", "eurjpy", "143.105", "0.000", "0.000", "141.075", "-0.06", "0.00", "-0.05", "19.96"],
  ["1364377822", "2014.03.11 10:38:44", "sell", "0.01", "usdjpy", "103.251", "0.000", "0.000", "101.684", "-0.04", "0.00", "-0.09", "15.41"],
  ["1364377823", "2014.03.11 10:38:47", "sell", "0.01", "nzdjpy", "87.654", "0.000", "0.000", "86.912", "-0.03", "0.00", "-0.39", "7.29"],
  ["1364377826", "2014.03.11 10:38:50", "sell", "0.01", "gbpjpy", "171.821", "0.000", "0.000", "168.958", "-0.07", "0.00", "-0.14", "28.15"],
];

function Terminal() {
  const tabs = ["Account History", "News", "Alerts", "Mailbox", "Market", "Signals", "Code Base", "Experts", "Journal"];
  return (
    <section className="flex h-[163px] shrink-0 border-b border-[#808080] pb-px pt-[3px]">
      <div className="flex w-[15px] flex-col items-center pr-px">
        <button aria-label="Close terminal" className="flex h-[14px] items-center">
          <svg width="6" height="6" stroke="#000" strokeWidth="1.800"><path d="M0 0l6 6M6 0L0 6" /></svg>
        </button>
        <div className="flex w-[13px] flex-1 items-end justify-center bg-[#808080] pb-1">
          <h2 className="rotate-180 text-[11px] leading-[13px] text-[#d5d3cc] [writing-mode:vertical-rl]">Terminal</h2>
        </div>
      </div>
      <div className="flex min-w-0 flex-1 flex-col border-l border-t border-[#808080] pr-1">
        <div className="flex h-[136px]">
          <div className="min-w-0 flex-1">
            <table className="w-full table-fixed border-collapse bg-white">
              <thead>
                <tr className="h-[17px] bg-[#d5d3cc]">
                  {COLUMNS.map((c, i) => (
                    <th
                      key={i}
                      className={`${WIDTHS[i]} border-b-2 border-r-2 border-[#555] p-0 font-normal leading-[15px] ${i ? "pr-[5px] text-right" : "pl-[5px] text-left"}`}
                    >
                      {c}
                      {i ? null : (
                        <svg className="ml-3 inline-block" width="9" height="7" fill="none" stroke="#aaa8a2"><path d="M4.500 .5L.5 6.500h8z" /></svg>
                      )}
                    </th>
                  ))}
                </tr>
              </thead>
              <tbody>
                {ORDERS.map((row, r) => (
                  <tr key={r} className={`h-5 border-b border-[#c8c6c6] ${r % 2 ? "bg-[#eeecef]" : "bg-white"}`}>
                    {row.map((v, i) => (
                      <td key={i} className={`p-0 ${i < 12 ? "border-r border-[#c8c6c6] pr-[3px]" : "pr-[6px]"} ${i ? "text-right" : ""}`}>
                        {i === 0 ? (
                          <span className="flex items-center gap-[6px] pl-[3px]"><OrderIcon />{v}</span>
                        ) : i === 12 ? (
                          <span className="flex items-center justify-end gap-[10px]">
                            {v}
                            <button aria-label={`Close order ${row[0]}`}>
                              <svg width="7" height="7" stroke="#777" strokeWidth="1.800"><path d="M0 0l7 7M7 0L0 7" /></svg>
                            </button>
                          </span>
                        ) : v}
                      </td>
                    ))}
                  </tr>
                ))}
              </tbody>
            </table>
            <div className="flex h-[19px] items-center bg-[#cbc9ca] pl-1 font-bold">
              <Icon size={13}>
                <rect x="1" y="0" width="13" height="16" fill="#fff" stroke="#666" />
                <path d="M7.500 3l4.500 5H9.500v5h-4V8H3z" fill="#28a828" stroke="#107010" />
              </Icon>
              <span className="ml-[7px] flex gap-[6px] whitespace-nowrap">
                <span>Balance: 283.49 USD</span>
                <span>Equity: 392.01</span>
                <span>Margin: 15.68</span>
                <span>Free margin: 376.33</span>
                <span>Margin level: 2500.01%</span>
              </span>
              <span className="ml-auto pr-[25px]">108.52</span>
            </div>
          </div>
          <div className="flex w-4 flex-col bg-[repeating-conic-gradient(#fff_0_25%,#dddbd6_0_50%)] bg-[length:2px_2px]">
            <button aria-label="Scroll up" className={`flex h-4 items-center justify-center ${raised}`}><svg width="7" height="4"><path d="M0 4h7L3.500 0z" /></svg></button>
            <div className={`mt-[26px] h-[64px] ${raised}`} />
            <button aria-label="Scroll down" className={`mt-auto flex h-4 items-center justify-center ${raised}`}><Caret /></button>
          </div>
        </div>
        <div className="flex h-[19px] items-start border-t border-black pl-[2px] text-[#555]">
          <button className="-mt-px h-[18px] w-12 shrink-0 border border-t-0 border-black bg-white text-black">Trade</button>
          {tabs.map((t) => (
            <div key={t} className="flex h-[18px] items-center gap-[10px] whitespace-nowrap pl-2">
              <button className="flex items-center gap-[3px]">
                {t}
                {t === "Signals" ? <span className="pt-1 text-[8px] font-bold leading-none text-red-600 line-through">184</span> : null}
              </button>
              <Sep className="h-[11px]" />
            </div>
          ))}
        </div>
      </div>
    </section>
  );
}

function StatusBar() {
  const cells = ["w-[101px]", "w-[72px]", "w-[71px]", "w-[70px]", "w-[70px]", "w-[66px]"];
  return (
    <footer className="flex h-[23px] shrink-0 items-center border-b border-white pt-[2px]">
      <span className="min-w-0 flex-1 pl-[2px]">Trading orders page</span>
      <span className="flex h-4 w-[109px] items-center border-l border-[#808080] pl-[5px]">JPY_basket</span>
      {cells.map((c, i) => <span key={i} className={`h-4 border-l border-[#808080] ${c}`} />)}
      <span className="flex h-4 w-[162px] items-center border-l border-[#808080] pl-[5px]">
        <svg width="24" height="12" aria-hidden="true">
          {[0, 1, 2, 3, 4, 5, 6, 7].map((i) => (
            <g key={i}>
              <rect x={i * 3} y="0" width="2" height={10 - i} fill="#6c8418" />
              <rect x={i * 3} y={11 - i} width="2" height={i + 1} fill="#14486c" />
            </g>
          ))}
        </svg>
        <span className="flex-1 pr-1 text-center">192198/212 kb</span>
      </span>
    </footer>
  );
}

function Taskbar() {
  return (
    <div className="flex h-[26px] shrink-0 items-center pl-[2px] pr-[3px] pt-px">
      <button className={`flex h-[22px] w-[52px] items-center gap-[2px] pl-[1px] font-bold ${raised}`}>
        <Icon>
          <path d="M3 3c2-1.500 3.500-1 5 0L7 7.500c-1.500-1-3-1-5 0z" fill="#f05828" />
          <path d="M9 3.300c2 1 3.500 1 5.500 0L13.500 8c-2 1-3.500 1-5.500 0z" fill="#78b828" />
          <path d="M1.800 8.500c2-1.300 3.400-1 4.800 0L5.600 13c-1.500-1-3-1-5 0z" fill="#3888d8" />
          <path d="M7.700 9c2 1 3.500 1 5.500 0l-1 4.500c-2 1-3.500 1-5.500 0z" fill="#f8c828" />
        </Icon>
        Start
      </button>
      <Sep className="ml-2 h-4" />
      <button aria-label="Internet Explorer" className="ml-2">
        <Icon size={18}>
          <path d="M13 11.500A5 5 0 1 1 13.200 8H4" stroke="#2c94dc" strokeWidth="2.300" />
          <path d="M1 14.500C0 12 9 3 14.500 2c1.500 0 1 2 0 3" stroke="#f0b828" strokeWidth="1.300" />
        </Icon>
      </button>
      <button aria-label="Show desktop" className="ml-[5px]">
        <Icon><rect x=".5" y="2" width="15" height="11.500" fill="#1c58b0" stroke="#789" /><path d="M1 11L13 2.500h2V9z" fill="#58a0e8" /><path d="M3 11h4v3H3z" fill="#cde" /></Icon>
      </button>
      <Sep className="ml-5 h-4" />
      <button className={`ml-1 flex h-[22px] w-[160px] items-center gap-[3px] whitespace-nowrap pl-1 font-bold ${pressed}`}>
        <LogoIcon />
        9496811: Alpari Limit...
      </button>
      <div className="ml-auto flex h-[22px] w-[126px] items-center border border-b-white border-l-[#808080] border-r-white border-t-[#808080] pl-[2px] pr-[6px]">
        <Icon><path d="M3 1h5v4H3zM1 5h8v5l-2 3v3H4v-3l-3-3z" fill="#888" stroke="#555" strokeWidth=".6" /><circle cx="11.500" cy="11" r="4.500" fill="#30a830" /><path d="M9 11l2 2 3-4" stroke="#fff" strokeWidth="1.500" /></Icon>
        <span className="w-3" />
        <Icon><rect x="4" y="1" width="10" height="8" fill="#2878c8" stroke="#345" /><rect x="1" y="5" width="10" height="8" fill="#1c60b0" stroke="#eee" /><path d="M3 15h7" stroke="#fff" strokeWidth="2" /><circle cx="12" cy="11" r="3.700" fill="#38b0d8" /><path d="M10 10l3 1-1 3" stroke="#40c040" strokeWidth="2" /></Icon>
        <span className="w-[2px]" />
        <Icon><path d="M0 5h3l5-4v14l-5-4H0z" fill="#f4f4fa" stroke="#789" /><circle cx="11.500" cy="11" r="4.300" fill="#e03028" /><path d="M9.500 9l4 4M13.500 9l-4 4" stroke="#fff" strokeWidth="1.400" /></Icon>
        <span className="ml-auto whitespace-nowrap">10:40 AM</span>
      </div>
    </div>
  );
}

function SystemBar() {
  return (
    <nav className="flex h-20 shrink-0 items-end bg-black">
      <button aria-label="Back" className="ml-4 flex h-12 w-12 items-center justify-center">
        <svg width="28" height="24" fill="none" stroke="#a4a4a4" strokeWidth="2"><path d="M1 8h20a5 5 0 0 1 0 14h-9M9 1L1.500 8 9 15" /></svg>
      </button>
      <button aria-label="Home" className="ml-8 flex h-12 w-12 items-center justify-center">
        <svg width="28" height="28" fill="none" stroke="#a4a4a4" strokeWidth="2"><path d="M1 15L14 2l5 5V3h3v7l5 5h-4v11h-6v-8h-6v8H5V15z" /></svg>
      </button>
      <button aria-label="Recent apps" className="ml-2 flex h-12 w-[98px] items-center justify-center rounded-[18px/24px] bg-[radial-gradient(ellipse_at_center,#0f5766_0%,#0b3f4b_60%,#07323c_100%)]">
        <svg width="30" height="24" fill="none" stroke="#f0f0f0" strokeWidth="2"><path d="M8 7V1h21v14h-6M1 8h21v14H1zM1 10h21" /></svg>
      </button>
      <button aria-label="Menu" className="ml-2 flex h-12 w-12 items-center justify-center">
        <svg width="26" height="24" stroke="#a4a4a4" strokeWidth="2"><path d="M0 2h26M0 9h26M0 16h26M0 22h26" /></svg>
      </button>
      <div className="ml-auto flex h-12 items-center pr-[17px]">
        <svg width="23" height="27"><path d="M2 0h13l8 8v17a2 2 0 0 1-2 2H2a2 2 0 0 1-2-2V2a2 2 0 0 1 2-2z" fill="#625c60" /><path d="M4 3v7M8 3v7M12 3v7" stroke="#111" strokeWidth="2" /></svg>
        <time className="ml-8 font-['DejaVu_Sans_Light','DejaVu_Sans',sans-serif] text-[32px] font-extralight leading-none text-[#3aa8d0]">10:40</time>
        <svg className="ml-[6px]" width="26" height="21" fill="none">
          <path d="M1 7a17 17 0 0 1 24 0" stroke="#555" strokeWidth="3" />
          <path d="M4.500 10.500a12 12 0 0 1 17 0M8 14a7 7 0 0 1 10 0" stroke="#2c9cc8" strokeWidth="2.800" />
          <path d="M9.500 16.500a5 5 0 0 1 7 0L13 20z" fill="#2c9cc8" />
        </svg>
        <svg className="ml-[17px]" width="14" height="21"><path d="M5 0h5v2h4v19H0V2h5z" fill="#4c4c4c" /><path d="M0 15h14v6H0z" fill="#3098c0" /></svg>
      </div>
    </nav>
  );
}

export default function App() {
  return (
    <div className="relative flex h-screen flex-col overflow-hidden bg-[#d5d3cc] font-['DejaVu_Sans_Condensed','Noto_Sans',sans-serif] text-[11px] leading-4 text-black">
      <header className="flex h-[18px] shrink-0 items-center gap-1 bg-[#08246b] pl-[2px]">
        <LogoIcon />
        <h1 className="flex-1 text-[11px] font-bold text-white">9496811: Alpari Limited MT4 - Demo Account - [AUDJPY,Daily]</h1>
        <WindowButtons />
      </header>
      <div className="flex h-[22px] shrink-0 items-center border-b border-white pl-1 shadow-[inset_0_-1px_0_#808080]">
        <ChartsIcon />
        <div className="flex flex-1 gap-[15px] pl-[6px]">
          {["File", "View", "Insert", "Charts", "Tools", "Window", "Help"].map((m) => <button key={m}>{m}</button>)}
        </div>
        <WindowButtons />
      </div>
      <Toolbars />
      <main className="flex min-h-0 flex-1">
        <Navigator />
        <ChartWindow />
      </main>
      <Terminal />
      <StatusBar />
      <Taskbar />
      <SystemBar />
      <svg className="absolute left-[1264px] top-[638px]" width="13" height="21" aria-hidden="true">
        <path d="M1 1v15l3.500-3.500L7 19l3-1.200-2.500-6H12z" fill="#fff" stroke="#000" />
      </svg>
    </div>
  );
}
